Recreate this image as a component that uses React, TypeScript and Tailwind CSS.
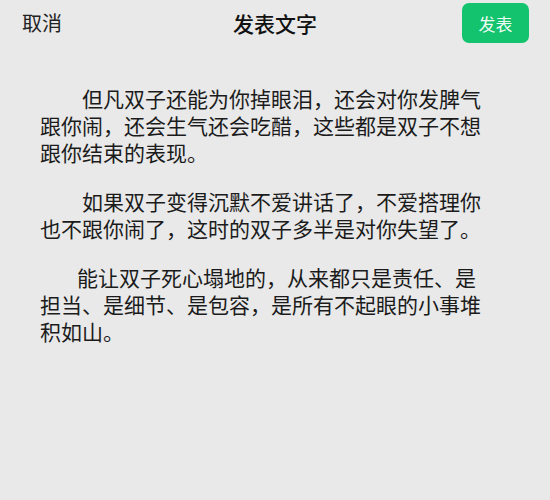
const font = { fontFamily: '"Noto Sans CJK SC", "Noto Sans", sans-serif' };

const paragraphs = [
  { indent: 'indent-[42px]', text: '但凡双子还能为你掉眼泪，还会对你发脾气跟你闹，还会生气还会吃醋，这些都是双子不想跟你结束的表现。' },
  { indent: 'indent-[42px]', text: '如果双子变得沉默不爱讲话了，不爱搭理你也不跟你闹了，这时的双子多半是对你失望了。' },
  { indent: 'indent-[37px]', text: '能让双子死心塌地的，从来都只是责任、是担当、是细节、是包容，是所有不起眼的小事堆积如山。' },
];

export default function App() {
  return (
    <div className="w-[550px] h-[500px] bg-[#e9e9e9] text-[#1b1b1b] overflow-hidden" style={font}>
      {/* 顶栏 */}
      <div className="h-[46px] flex items-center justify-between pl-[22px] pr-[21px] relative">
        <span className="text-[20px] leading-none text-[#222]">取消</span>
        <span className="absolute left-1/2 -translate-x-1/2 text-[21px] font-medium leading-none text-[#111]">发表文字</span>
        <button className="w-[67px] h-[40px] rounded-[7px] bg-[#13c36d] text-white/95 text-[17px] leading-none">发表</button>
      </div>

      {/* 正文 */}
      <div className="pl-[40px] w-[483px] pt-[39px] flex flex-col gap-[22px]">
        {paragraphs.map((p, i) => (
          <p key={i} className={`text-[21px] leading-[27px] ${p.indent}`}>{p.text}</p>
        ))}
      </div>
    </div>
  );
}
